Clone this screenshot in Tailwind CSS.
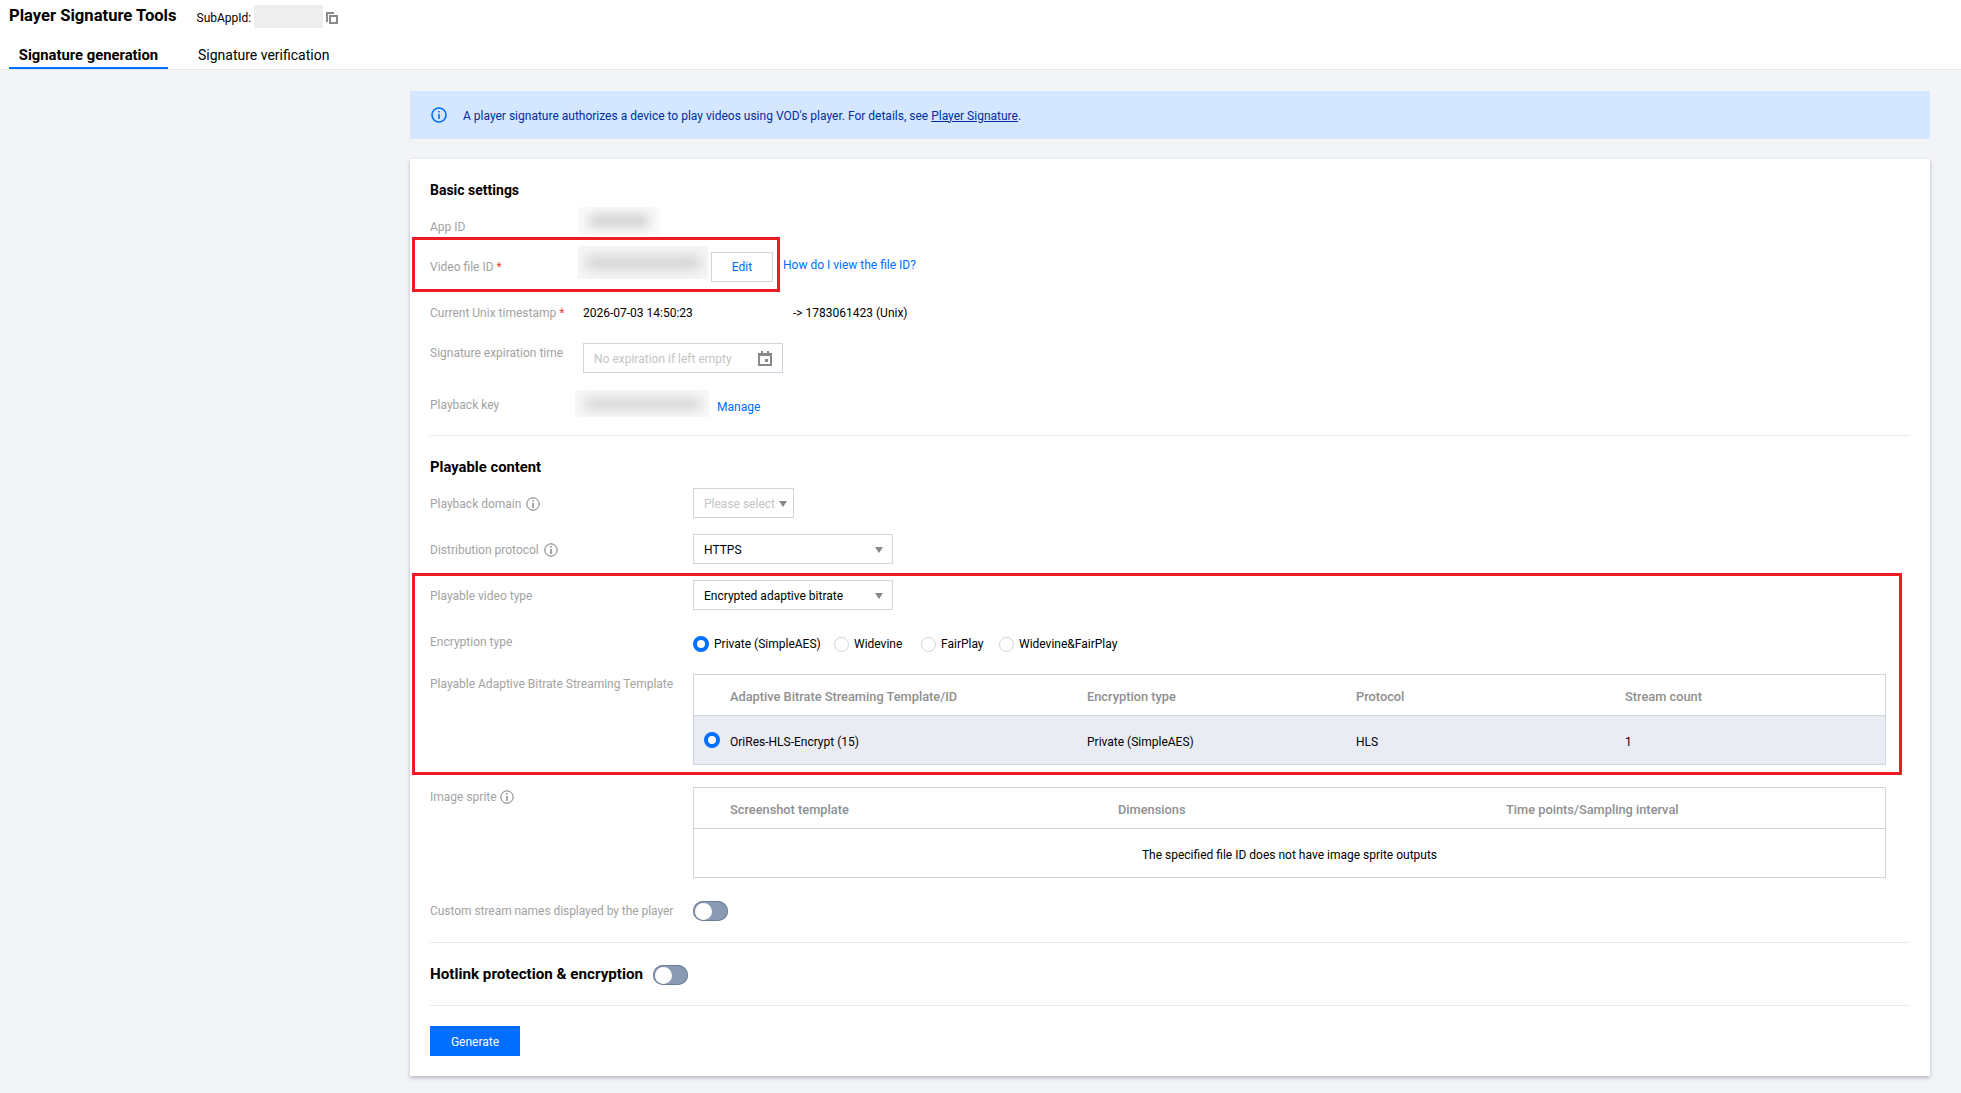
<!DOCTYPE html>
<html lang="en">
<head>
  <meta charset="UTF-8" />
  <title>Player Signature Tools</title>
  <script src="https://cdn.jsdelivr.net/npm/@tailwindcss/browser@4"></script>
</head>
<body class="bg-[#f2f4f8] font-['Roboto',sans-serif] text-[12px] text-black h-[1093px] overflow-hidden">
  <!-- header -->
  <header class="bg-white h-[70px] border-b border-[#e4e6ea]">
    <div class="flex items-center h-[33px] pl-[9px]">
      <h1 class="text-[16.6px] font-bold leading-none">Player Signature Tools</h1>
      <span class="ml-[20px] mt-[3px]">SubAppId:</span>
      <div class="ml-[3px] w-[69px] h-[23px] bg-[#eeeeee]"></div>
      <svg class="ml-[3px] mt-[2px]" width="12" height="12" viewBox="0 0 12 12" fill="#8a8a8a"><path d="M0 0h8v2H2v8H0z"/><path fill-rule="evenodd" d="M3 3h9v9H3zM5 5v5h5V5z"/></svg>
    </div>
    <nav class="flex pl-[9px] mt-[1px]">
      <a class="h-[35px] w-[159px] pt-[9px] flex items-center justify-center font-bold text-[14.8px] border-b-2 border-[#006eff]">Signature generation</a>
      <a class="h-[35px] ml-[30px] pt-[8px] flex items-center text-[14px]">Signature verification</a>
    </nav>
  </header>

  <main class="ml-[410px] w-[1520px] pt-[21px]">
    <div class="h-[48px] bg-[#d5e7ff] flex items-center pl-[21px] text-[#002da0]">
      <svg width="16" height="16" viewBox="0 0 16 16" fill="none" stroke="#006eff" stroke-width="1.6"><circle cx="8" cy="8" r="7"/><path d="M8 7v5M8 4v1.6"/></svg>
      <p class="ml-[16px] mt-[1px]">A player signature authorizes a device to play videos using VOD's player. For details, see <a class="underline">Player Signature</a>.</p>
    </div>

    <section class="relative bg-white mt-[20px] h-[917px] px-[20px] pt-[16px] shadow-[0_2px_4px_rgba(54,58,80,0.32)]">
      <!-- basic settings -->
      <h2 class="h-[30px] pt-[1px] flex items-center text-[14px] font-bold">Basic settings</h2>
      <div class="flex items-center h-[40px] mt-[2px]">
        <label class="w-[148px] text-[#a3a3a3]">App ID</label>
        <div class="w-[82px] h-[28px] -mt-[12px] bg-[#fafafa] overflow-hidden flex items-center justify-center"><div class="w-[60px] h-[12px] bg-[#cccccc] blur-[6px]"></div></div>
      </div>
      <div class="flex items-center h-[40px]">
        <label class="w-[148px] text-[#a3a3a3]">Video file ID <span class="text-[#e54545]">*</span></label>
        <div class="w-[130px] h-[33px] -mt-[9px] bg-[#f6f6f6] overflow-hidden flex items-center justify-center"><div class="w-[115px] h-[14px] bg-[#d4d4d4] blur-[6px]"></div></div>
        <button class="ml-[3px] w-[62px] h-[30px] border border-[#cfd5de] text-[#006eff] bg-white">Edit</button>
        <a class="ml-[10px] -mt-[4px] text-[#006eff]">How do I view the file ID?</a>
      </div>
      <div class="flex items-center h-[40px] mt-[5px] pt-[2px]">
        <label class="w-[153px] text-[#a3a3a3]">Current Unix timestamp <span class="text-[#e54545]">*</span></label>
        <span class="w-[210px]">2026-07-03 14:50:23</span>
        <span>-&gt; 1783061423 (Unix)</span>
      </div>
      <div class="flex items-start h-[30px] mt-[11px]">
        <label class="w-[153px] text-[#a3a3a3] mt-[1px]">Signature expiration time</label>
        <div class="w-[200px] h-[30px] border border-[#cfd5de] flex items-center pl-[10px] pr-[10px] justify-between">
          <span class="text-[#c4c4c4] mt-[1px]">No expiration if left empty</span>
          <svg width="14" height="15" viewBox="0 0 14 15" fill="#888888"><path fill-rule="evenodd" d="M3 0h2v2h4V0h2v2h3v13H0V2h3zM2 5v8h10V5z"/><path d="M7 8h3v3H7z"/></svg>
        </div>
      </div>
      <div class="flex items-center h-[40px] mt-[12px]">
        <label class="w-[145px] text-[#a3a3a3]">Playback key</label>
        <div class="w-[134px] h-[27px] -mt-[3px] bg-[#f8f8f8] overflow-hidden flex items-center justify-center"><div class="w-[115px] h-[12px] bg-[#d4d4d4] blur-[6px]"></div></div>
        <a class="ml-[8px] mt-[3px] text-[#006eff]">Manage</a>
      </div>
      <div class="h-px bg-[#e7eaef] mt-[10px]"></div>

      <!-- playable content -->
      <h2 class="h-[30px] pt-[1px] mt-[16px] flex items-center text-[14.8px] font-bold">Playable content</h2>
      <div class="flex items-center h-[30px] mt-[6px]">
        <label class="w-[263px] pt-[2px] flex items-center text-[#a3a3a3]">Playback domain
          <svg class="ml-[5px]" width="14" height="14" viewBox="0 0 14 14" fill="none" stroke="#777777"><circle cx="7" cy="7" r="6.2"/><path d="M7 6v5M7 3v1.5" stroke-width="1.3"/></svg>
        </label>
        <div class="w-[101px] h-[30px] pt-[1px] border border-[#cfd5de] flex items-center pl-[10px] pr-[6px] justify-between">
          <span class="text-[#c4c4c4]">Please select</span>
          <svg width="8" height="6" viewBox="0 0 8 6" fill="#888888"><path d="M0 0h8L4 6z"/></svg>
        </div>
      </div>
      <div class="flex items-center h-[30px] mt-[16px]">
        <label class="w-[263px] pt-[2px] flex items-center text-[#a3a3a3]">Distribution protocol
          <svg class="ml-[5px]" width="14" height="14" viewBox="0 0 14 14" fill="none" stroke="#777777"><circle cx="7" cy="7" r="6.2"/><path d="M7 6v5M7 3v1.5" stroke-width="1.3"/></svg>
        </label>
        <div class="w-[200px] h-[30px] pt-[1px] border border-[#cfd5de] flex items-center pl-[10px] pr-[9px] justify-between">
          <span>HTTPS</span>
          <svg width="8" height="6" viewBox="0 0 8 6" fill="#888888"><path d="M0 0h8L4 6z"/></svg>
        </div>
      </div>
      <div class="flex items-center h-[30px] mt-[16px]">
        <label class="w-[263px] pt-[2px] text-[#a3a3a3]">Playable video type</label>
        <div class="w-[200px] h-[30px] pt-[1px] border border-[#cfd5de] flex items-center pl-[10px] pr-[9px] justify-between">
          <span>Encrypted adaptive bitrate</span>
          <svg width="8" height="6" viewBox="0 0 8 6" fill="#888888"><path d="M0 0h8L4 6z"/></svg>
        </div>
      </div>
      <div class="flex items-center h-[32px] mt-[18px]">
        <label class="w-[263px] -mt-[4px] text-[#a3a3a3]">Encryption type</label>
        <span class="w-[16px] h-[16px] rounded-full border-[4px] border-[#006eff] bg-white"></span>
        <span class="ml-[5px] w-[120px]">Private (SimpleAES)</span>
        <span class="w-[15px] h-[15px] rounded-full border border-[#cfd5de] bg-white"></span>
        <span class="ml-[5px] w-[67px]">Widevine</span>
        <span class="w-[15px] h-[15px] rounded-full border border-[#cfd5de] bg-white"></span>
        <span class="ml-[5px] w-[58px]">FairPlay</span>
        <span class="w-[15px] h-[15px] rounded-full border border-[#cfd5de] bg-white"></span>
        <span class="ml-[5px]">Widevine&amp;FairPlay</span>
      </div>

      <div class="flex mt-[14px]">
        <label class="w-[263px] mt-[1px] text-[#a3a3a3]">Playable Adaptive Bitrate Streaming Template</label>
        <div class="w-[1193px] border border-[#cfd5de]">
          <div class="grid grid-cols-[393px_269px_269px_1fr] h-[41px] pt-[4px] items-center font-medium text-[12.8px] text-[#8f8f8f] border-b border-[#cfd5de]">
            <span class="pl-[36px]">Adaptive Bitrate Streaming Template/ID</span>
            <span>Encryption type</span>
            <span>Protocol</span>
            <span>Stream count</span>
          </div>
          <div class="grid grid-cols-[393px_269px_269px_1fr] h-[48px] pt-[3px] items-center bg-[#e9edf3]">
            <span class="pl-[10px] flex items-center"><span class="w-[16px] h-[16px] -mt-[3px] rounded-full border-[4px] border-[#006eff] bg-white"></span><span class="ml-[10px]">OriRes-HLS-Encrypt (15)</span></span>
            <span>Private (SimpleAES)</span>
            <span>HLS</span>
            <span>1</span>
          </div>
        </div>
      </div>

      <div class="flex mt-[22px]">
        <label class="w-[263px] pt-[1px] flex items-start text-[#a3a3a3]"><span>Image sprite</span>
          <svg class="ml-[3px] mt-[2px]" width="14" height="14" viewBox="0 0 14 14" fill="none" stroke="#777777"><circle cx="7" cy="7" r="6.2"/><path d="M7 6v5M7 3v1.5" stroke-width="1.3"/></svg>
        </label>
        <div class="w-[1193px] border border-[#cfd5de]">
          <div class="grid grid-cols-[424px_388px_1fr] h-[41px] pt-[4px] items-center font-medium text-[12.8px] text-[#8f8f8f] border-b border-[#cfd5de]">
            <span class="pl-[36px]">Screenshot template</span>
            <span>Dimensions</span>
            <span>Time points/Sampling interval</span>
          </div>
          <div class="h-[48px] pt-[3px] flex items-center justify-center">The specified file ID does not have image sprite outputs</div>
        </div>
      </div>

      <div class="flex items-center h-[20px] mt-[23px]">
        <label class="w-[263px] text-[#a3a3a3] tracking-[-0.05px]">Custom stream names displayed by the player</label>
        <span class="w-[35px] h-[20px] rounded-full bg-[#8a9ab2] shadow-[inset_0_0_0_1px_#6b7f9c] flex items-center pl-[2px]"><span class="w-[17px] h-[17px] rounded-full bg-white"></span></span>
      </div>
      <div class="h-px bg-[#e7eaef] mt-[21px]"></div>

      <div class="flex items-center h-[20px] mt-[22px]">
        <h2 class="text-[15.2px] font-bold w-[223px] -mt-[2px]">Hotlink protection &amp; encryption</h2>
        <span class="w-[35px] h-[20px] rounded-full bg-[#8a9ab2] shadow-[inset_0_0_0_1px_#6b7f9c] flex items-center pl-[2px]"><span class="w-[17px] h-[17px] rounded-full bg-white"></span></span>
      </div>
      <div class="h-px bg-[#e7eaef] mt-[20px]"></div>

      <button class="block w-[90px] h-[30px] pt-[1px] mt-[20px] bg-[#006eff] text-white">Generate</button>

      <!-- red annotation boxes -->
      <div class="absolute left-[2px] top-[78px] w-[368px] h-[55px] border-[3px] border-[#ed1c24]"></div>
      <div class="absolute left-[2px] top-[414px] w-[1490px] h-[202px] border-[3px] border-[#ed1c24]"></div>
    </section>
  </main>
</body>
</html>
